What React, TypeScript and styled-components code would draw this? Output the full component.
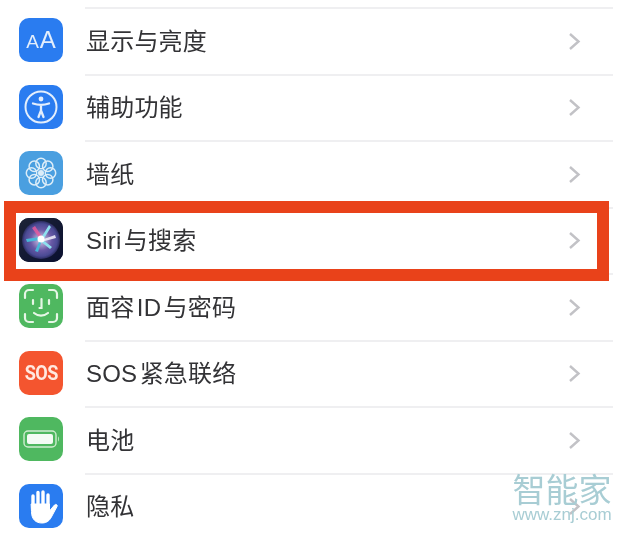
import styled, { createGlobalStyle } from 'styled-components'
import type { ReactNode } from 'react'

const GlobalStyle = createGlobalStyle`
    html, body {
        margin: 0;
        background: #fff;
    }
    body {
        width: 621px;
        height: 533px;
        overflow: hidden;
        font-family: 'Liberation Sans', 'Noto Sans CJK SC', sans-serif;
    }
`

const Page = styled('div')`
    position: relative;
    height: 533px;
    overflow: hidden;
    padding-top: 7px;
    box-sizing: border-box;
`

const Row = styled('div')`
    position: relative;
    display: flex;
    align-items: center;
    height: 66.5px;
    padding-left: 19px;
    gap: 22px;
`

const IconBox = styled('div')<{ $bg: string }>`
    flex: none;
    width: 44px;
    height: 44px;
    border-radius: 10px;
    overflow: hidden;
    background: ${(props) => props.$bg};
    display: flex;
    align-items: center;
    justify-content: center;
    color: #fff;
    filter: blur(0.5px);

    svg {
        display: block;
    }
`

const Content = styled('div')`
    flex: 1;
    align-self: stretch;
    display: flex;
    align-items: center;
    justify-content: space-between;
    margin-right: 8px;
    padding-right: 32px;
    border-top: 2px solid #efeff1;
    box-sizing: border-box;
`

const Label = styled('span')`
    font-size: 24px;
    line-height: 30px;
    letter-spacing: 0.2px;
    word-spacing: -4.5px;
    color: #333336;
    white-space: nowrap;
    filter: blur(0.4px);
    margin: 1px 0 0 1px;
`

const Highlight = styled('div')`
    position: absolute;
    z-index: 1;
    top: -6px;
    left: 4px;
    width: 605px;
    height: 80px;
    border: 12.5px solid #e9421a;
    box-sizing: border-box;
`

const AaText = styled('span')`
    font-family: 'Liberation Sans', sans-serif;
    display: flex;
    align-items: baseline;
    gap: 1px;
    color: #e3eefc;
    font-size: 24px;
    line-height: 1;

    small {
        font-size: 19px;
    }
`

const SosText = styled('span')`
    font-family: 'Roboto', 'Liberation Sans', sans-serif;
    font-weight: 700;
    font-size: 21px;
    letter-spacing: -0.6px;
    color: #ffe9e0;
    transform: scaleX(0.86);
`

const Watermark = styled('div')`
    position: absolute;
    z-index: 2;
    left: 510px;
    top: 470px;
    width: 104px;
    display: flex;
    flex-direction: column;
    align-items: center;
    color: #a8cdd4;
    filter: blur(0.4px);
`

const MarkTitle = styled('div')`
    font-size: 33px;
    line-height: 36px;
    font-family: 'Noto Sans CJK SC', sans-serif;
    white-space: nowrap;
`

const MarkUrl = styled('div')`
    font-size: 17px;
    line-height: 18px;
    font-family: 'Liberation Sans', sans-serif;
    white-space: nowrap;
`

const Chevron = () => (
    <svg width="13" height="19" viewBox="0 0 13 19" fill="none">
        <path d="M2 2l8.5 7.5L2 17" stroke="#c2c2c6" strokeWidth="2.4" />
    </svg>
)

const AccessIcon = () => (
    <svg width="44" height="44" viewBox="0 0 44 44" fill="none" stroke="#e3eefc">
        <circle cx="22" cy="22" r="15.5" strokeWidth="2" />
        <circle cx="22" cy="14" r="2.4" fill="#e3eefc" stroke="none" />
        <path
            d="M14 18.5c2.6.9 5.3 1.4 8 1.4s5.400-.5 8-1.400M22 20v6M22 25.500l-2.500 6.500M22 25.500l2.500 6.500"
            strokeWidth="2.300"
            strokeLinecap="round"
        />
    </svg>
)

const FlowerIcon = () => {
    const petals = [0, 45, 90, 135, 180, 225, 270, 315]
    return (
        <svg width="44" height="44" viewBox="0 0 44 44" fill="none" stroke="#dcedf8">
            {petals.map((angle) => (
                <circle
                    key={angle}
                    cx="22"
                    cy="12.500"
                    r="5.200"
                    strokeWidth="1.500"
                    transform={`rotate(${angle} 22 22)`}
                />
            ))}
            <circle cx="22" cy="22" r="3" fill="#dcedf8" stroke="none" />
        </svg>
    )
}

const SiriIcon = () => (
    <svg width="44" height="44" viewBox="0 0 44 44">
        <defs>
            <linearGradient id="siriBg" x1="0" y1="0" x2="1" y2="1">
                <stop offset="0" stopColor="#1d2336" />
                <stop offset="1" stopColor="#0a1030" />
            </linearGradient>
            <radialGradient id="siriOrb" cx="0.5" cy="0.5" r="0.5">
                <stop offset="0" stopColor="#d8d0ea" />
                <stop offset="0.55" stopColor="#6a5aa6" />
                <stop offset="0.85" stopColor="#4a4a94" />
                <stop offset="1" stopColor="#2b2c60" />
            </radialGradient>
        </defs>
        <rect width="44" height="44" fill="url(#siriBg)" />
        <circle cx="22" cy="22" r="19" fill="url(#siriOrb)" />
        <path d="M22 20 30 7l2 2-8 13 9 7-2 2-10-8z" fill="#8ee0ee" />
        <path d="M21 22 8 24l-1-3 14-2 2 3-4 12-3-1z" fill="#48b8d8" />
        <path d="M21 21 13 10l3-2 8 12-2 2z" fill="#e65a9e" opacity="0.85" />
        <path d="M22 22 36 17l1 3-15 4z" fill="#f2f0fa" opacity="0.85" />
        <circle cx="22" cy="21" r="3.500" fill="#fff" />
    </svg>
)

const FaceIcon = () => (
    <svg
        width="44"
        height="44"
        viewBox="0 0 44 44"
        fill="none"
        stroke="#e6f6e6"
        strokeWidth="2.200"
        strokeLinecap="round"
    >
        <path d="M6 14V10a4 4 0 0 1 4-4h4M30 6h4a4 4 0 0 1 4 4v4M38 30v4a4 4 0 0 1-4 4h-4M14 38h-4a4 4 0 0 1-4-4v-4" />
        <path d="M14 16v4M30 16v4M22.500 15v9h-2M15 29c4 3.400 10 3.400 14 0" />
    </svg>
)

const BatteryIcon = () => (
    <svg width="44" height="44" viewBox="0 0 44 44" fill="none">
        <rect x="5" y="14" width="32" height="16" rx="4" stroke="#cfeccf" strokeWidth="1.400" />
        <rect x="8" y="17" width="26" height="10" rx="2" fill="#f4fbf4" />
        <path d="M39 19.500c1.200.4 1.200 4.600 0 5z" fill="#cfeccf" />
    </svg>
)

const HandIcon = () => (
    <svg width="44" height="44" viewBox="0 0 44 44" fill="#fff" stroke="#fff" strokeLinecap="round">
        <path d="M14 24V12M19 22V8.500M24 22V8M29 23V11" strokeWidth="3.400" fill="none" />
        <path
            d="M12.500 20h18v7l5-6c1.500-1.500 3.400 0 2.500 1.600l-5.600 10.400C30.500 36.500 28 39 23 39c-6 0-10.500-3.500-10.500-11z"
            strokeWidth="1"
        />
    </svg>
)

type SettingRow = {
    label: string
    bg: string
    icon: ReactNode
    highlighted?: boolean
}

const rows: SettingRow[] = [
    {
        label: '显示与亮度',
        bg: '#2a7cf0',
        icon: (
            <AaText>
                <small>A</small>A
            </AaText>
        ),
    },
    { label: '辅助功能', bg: '#2a7cf0', icon: <AccessIcon /> },
    { label: '墙纸', bg: '#4a9fe0', icon: <FlowerIcon /> },
    { label: 'Siri 与搜索', bg: '#10142c', icon: <SiriIcon />, highlighted: true },
    { label: '面容 ID 与密码', bg: '#4fb860', icon: <FaceIcon /> },
    { label: 'SOS 紧急联络', bg: '#f4552f', icon: <SosText>SOS</SosText> },
    { label: '电池', bg: '#4fb860', icon: <BatteryIcon /> },
    { label: '隐私', bg: '#2a7cf0', icon: <HandIcon /> },
]

const App = () => {
    return (
        <Page>
            <GlobalStyle />
            {rows.map((row) => (
                <Row key={row.label}>
                    <IconBox $bg={row.bg}>{row.icon}</IconBox>
                    <Content>
                        <Label>{row.label}</Label>
                        <Chevron />
                    </Content>
                    {row.highlighted && <Highlight />}
                </Row>
            ))}
            <Watermark>
                <MarkTitle>智能家</MarkTitle>
                <MarkUrl>www.znj.com</MarkUrl>
            </Watermark>
        </Page>
    )
}

export default App
